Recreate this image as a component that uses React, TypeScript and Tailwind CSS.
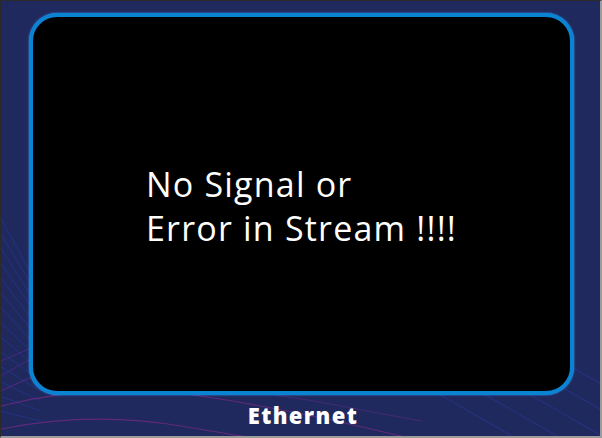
import React from "react";

function Backdrop() {
  const diag = [] as React.ReactElement[];
  for (let i = 0; i < 14; i++) {
    const y = 200 + i * 16;
    diag.push(
      <line key={"l" + i} x1={-10} y1={y} x2={40} y2={y + 90 - i * 6} stroke="#2a3aa0" strokeOpacity={0.55} strokeWidth={1} />
    );
  }
  const rd = [] as React.ReactElement[];
  for (let i = 0; i < 6; i++) {
    rd.push(
      <line key={"r" + i} x1={380 + i * 45} y1={360} x2={520 + i * 45} y2={440} stroke="#2b3a9a" strokeOpacity={0.5} strokeWidth={1.2} />
    );
  }
  return (
    <svg className="absolute inset-0" width={602} height={438} viewBox="0 0 602 438">
      {diag}
      {rd}
      <path d="M0 390 Q20 380 60 365" stroke="#7a2a9a" strokeOpacity={0.6} fill="none" />
      <path d="M0 405 Q100 380 200 395 T420 440" stroke="#8a2a8e" strokeOpacity={0.6} fill="none" strokeWidth={1.2} />
      <path d="M0 428 Q90 410 180 425 T300 445" stroke="#8a2a8e" strokeOpacity={0.6} fill="none" strokeWidth={1.2} />
      <path d="M220 385 Q320 400 420 420" stroke="#6a2a8e" strokeOpacity={0.5} fill="none" />
      <path d="M0 360 L35 345" stroke="#6a2aa0" strokeOpacity={0.5} fill="none" />
      <path d="M0 375 L40 352" stroke="#6a2aa0" strokeOpacity={0.5} fill="none" />
    </svg>
  );
}

export default function App() {
  return (
    <div
      className="relative w-[602px] h-[438px] overflow-hidden bg-[#1f295d] border-t border-l border-t-[#2a2a2a] border-l-[#2a2a2a] border-r-2 border-b-2 border-r-[#9c9c9c] border-b-[#9c9c9c]"
      style={{ fontFamily: '"Open Sans", "Noto Sans", sans-serif' }}
    >
      <Backdrop />
      <div className="relative flex flex-col pl-[28px] pt-[12px]">
        <div className="w-[545px] h-[382px] rounded-[28px] border-4 border-[#0b83d3] bg-black flex items-center justify-center shadow-[0_0_2px_#3aa0ff]">
          <div className="text-white text-[34px] leading-[44px] text-left mt-[4px] tracking-[1.2px]">
            <div>No Signal or</div>
            <div>Error in Stream !!!!</div>
          </div>
        </div>
        <div className="w-[545px] flex justify-center pt-[6px] pl-[3px]">
          <span className="text-white font-extrabold text-[22px] leading-[28px] tracking-[1.4px]">Ethernet</span>
        </div>
      </div>
    </div>
  );
}
